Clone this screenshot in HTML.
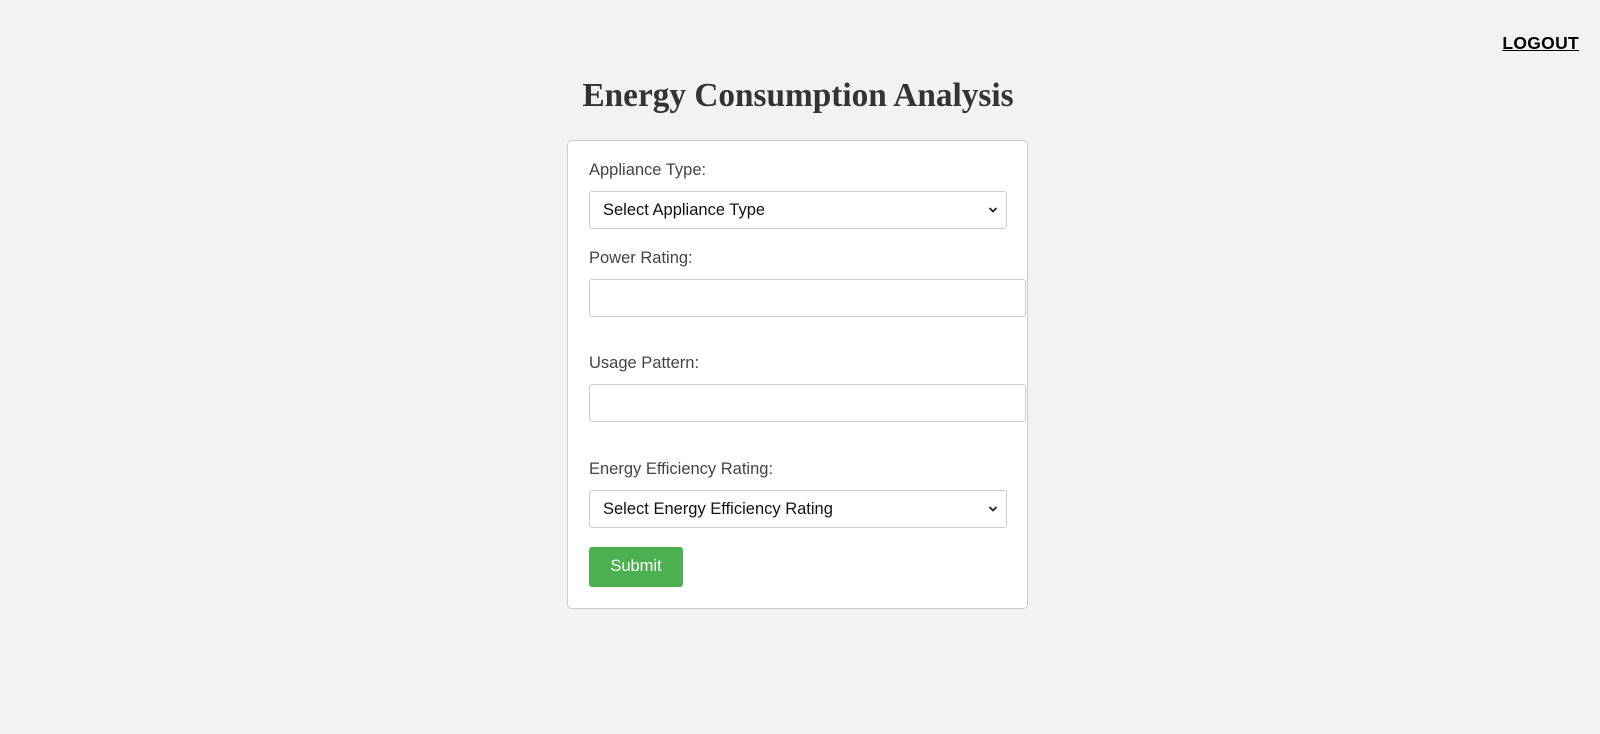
<!DOCTYPE html>
<html><head><meta charset="utf-8"><style>
body{margin:0;width:1600px;height:734px;background:#f2f2f2;font-family:"Liberation Sans",sans-serif;position:relative;overflow:hidden}
.a{position:absolute}
.logout{right:21px;top:33px;font-weight:bold;font-size:17.5px;color:#000;text-decoration:underline;letter-spacing:0.3px}
h1{position:absolute;left:0;width:1596px;top:77px;margin:0;text-align:center;font-family:"Liberation Serif",serif;font-size:33.3px;font-weight:bold;color:#333}
.card{left:567px;top:140px;width:459px;height:467px;background:#fff;border:1px solid #ccc;border-radius:5px}
.lbl{font-size:16.5px;color:#444;left:589px}
.box{left:589px;background:#fff;border:1px solid #ccc;border-radius:3px;box-sizing:border-box;height:38px}
.sel{font-size:16.5px;color:#111;padding-left:13px;line-height:36px}
.chev{position:absolute;right:8px;top:14px}
.btn{left:589px;top:547px;width:94px;height:40px;background:#4caf50;border-radius:3px;color:#fff;font-size:16.5px;text-align:center;line-height:39px}
</style></head><body>
<div class="a logout">LOGOUT</div>
<h1>Energy Consumption Analysis</h1>
<div class="a card"></div>
<div class="a lbl" style="top:161px">Appliance Type:</div>
<div class="a box sel" style="top:191px;width:418px">Select Appliance Type<svg class="chev" width="10" height="8" viewBox="0 0 10 8"><path d="M1.5 2 L5 5.5 L8.5 2" fill="none" stroke="#222" stroke-width="1.8"/></svg></div>
<div class="a lbl" style="top:249px">Power Rating:</div>
<div class="a box" style="top:279px;width:437px"></div>
<div class="a lbl" style="top:354px">Usage Pattern:</div>
<div class="a box" style="top:384px;width:437px"></div>
<div class="a lbl" style="top:460px">Energy Efficiency Rating:</div>
<div class="a box sel" style="top:490px;width:418px">Select Energy Efficiency Rating<svg class="chev" width="10" height="8" viewBox="0 0 10 8"><path d="M1.5 2 L5 5.5 L8.5 2" fill="none" stroke="#222" stroke-width="1.8"/></svg></div>
<div class="a btn">Submit</div>
</body></html>
